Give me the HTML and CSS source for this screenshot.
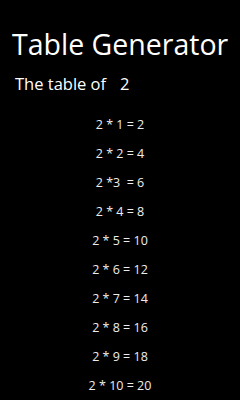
FILE: index.html
```html
<!DOCTYPE html>
<html>
<head>
  <title>Table Generator</title>
  <link rel="stylesheet" href="styles.css">
</head>
<body>
  <h1 class="title">Table Generator</h1>

  <div class="prompt">
    <span class="prompt-label">The table of</span>
    <span class="prompt-value">2</span>
  </div>

  <ul class="table-list">
    <li>2 * 1 = 2</li>
    <li>2 * 2 = 4</li>
    <li>2 *3  = 6</li>
    <li>2 * 4 = 8</li>
    <li>2 * 5 = 10</li>
    <li>2 * 6 = 12</li>
    <li>2 * 7 = 14</li>
    <li>2 * 8 = 16</li>
    <li>2 * 9 = 18</li>
    <li>2 * 10 = 20</li>
  </ul>
</body>
</html>
```

FILE: styles.css
```css
* {
  margin: 0;
  padding: 0;
  box-sizing: border-box;
}

body {
  font-family: 'Open Sans', sans-serif;
  background-color: #000;
  color: #fff;
  width: 240px;
  height: 400px;
  overflow: hidden;
  padding: 24px 0 0 12px;
}

.title {
  font-size: 28.5px;
  font-weight: 400;
  line-height: 40px;
}

.prompt {
  display: flex;
  align-items: baseline;
  gap: 14px;
  padding-left: 3px;
  margin-top: 7px;
  font-size: 16.5px;
  line-height: 26px;
}

.table-list {
  list-style: none;
  margin-top: 13px;
  margin-left: -12px;
  text-align: center;
  color: #eee;
}

.table-list li {
  font-size: 12.5px;
  line-height: 29px;
  white-space: pre;
}
```
